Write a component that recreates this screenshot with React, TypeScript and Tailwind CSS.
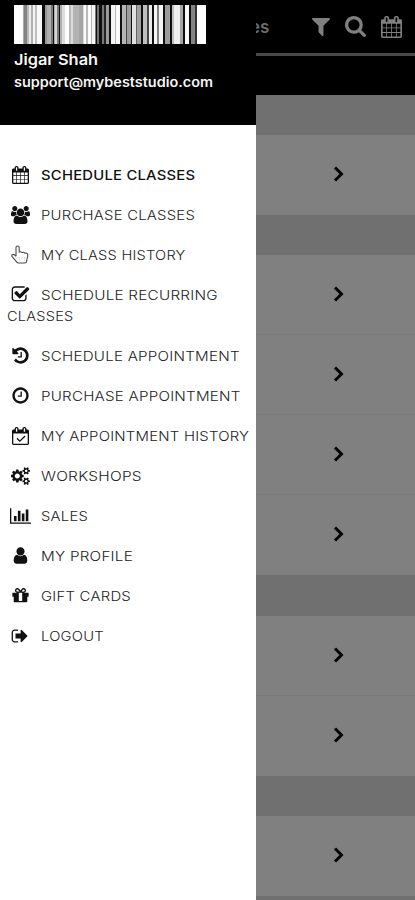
interface IconShape {
  box: string;
  d: string;
}

const calendar: IconShape = {
  box: '64 0 1664 1792',
  d: 'M192 1664h288v-288h-288v288zm352 0h320v-288h-320v288zm-352-352h288v-320h-288v320zm352 0h320v-320h-320v320zm-352-384h288v-288h-288v288zm736 736h320v-288h-320v288zm-384-736h320v-288h-320v288zm768 736h288v-288h-288v288zm-384-352h320v-320h-320v320zm-352-864v-288q0-13-9.5-22.5t-22.5-9.5h-64q-13 0-22.5 9.5t-9.5 22.5v288q0 13 9.5 22.5t22.5 9.5h64q13 0 22.5-9.5t9.5-22.5zm736 864h288v-320h-288v320zm-384-384h320v-288h-320v288zm384 0h288v-288h-288v288zm32-480v-288q0-13-9.5-22.5t-22.5-9.5h-64q-13 0-22.5 9.5t-9.5 22.5v288q0 13 9.5 22.5t22.5 9.5h64q13 0 22.5-9.5t9.5-22.5zm384-64v1280q0 52-38 90t-90 38h-1408q-52 0-90-38t-38-90v-1280q0-52 38-90t90-38h128v-96q0-66 47-113t113-47h64q66 0 113 47t47 113v96h384v-96q0-66 47-113t113-47h64q66 0 113 47t47 113v96h128q52 0 90 38t38 90z',
};
const users: IconShape = {
  box: '0 0 1920 1792',
  d: 'M593 896q-162 5-265 128h-134q-82 0-138-40.5t-56-118.5q0-353 124-353 6 0 43.5 21t97.5 42.5 119 21.5q67 0 133-23-5 37-5 66 0 139 81 256zm1071 637q0 120-73 189.5t-194 69.5h-874q-121 0-194-69.5t-73-189.5q0-53 3.5-103.5t14-109 26.5-108.5 43-97.5 62-81 85.5-53.5 111.5-20q10 0 43 21.5t73 48 107 48 135 21.5 135-21.5 107-48 73-48 43-21.5q61 0 111.5 20t85.5 53.5 62 81 43 97.5 26.5 108.5 14 109 3.5 103.5zm-1024-1277q0 106-75 181t-181 75-181-75-75-181 75-181 181-75 181 75 75 181zm704 384q0 159-112.5 271.5t-271.5 112.5-271.5-112.5-112.5-271.5 112.5-271.5 271.5-112.5 271.5 112.5 112.5 271.5zm576 225q0 78-56 118.5t-138 40.5h-134q-103-123-265-128 81-117 81-256 0-29-5-66 66 23 133 23 59 0 119-21.5t97.5-42.5 43.5-21q124 0 124 353zm-128-609q0 106-75 181t-181 75-181-75-75-181 75-181 181-75 181 75 75 181z',
};
const checkSquare: IconShape = {
  box: '0 0 1792 1792',
  d: 'M1472 930v318q0 119-84.5 203.5t-203.5 84.5h-832q-119 0-203.5-84.5t-84.5-203.5v-832q0-119 84.5-203.5t203.5-84.5h832q63 0 117 25 15 7 18 23 3 17-9 29l-49 49q-10 10-23 10-3 0-9-2-23-6-45-6h-832q-66 0-113 47t-47 113v832q0 66 47 113t113 47h832q66 0 113-47t47-113v-254q0-13 9-22l64-64q10-10 23-10 6 0 12 3 20 8 20 29zm231-489l-814 814q-24 24-57 24t-57-24l-430-430q-24-24-24-57t24-57l110-110q24-24 57-24t57 24l263 263 647-647q24-24 57-24t57 24l110 110q24 24 24 57t-24 57z',
};
const history: IconShape = {
  box: '0 0 1792 1792',
  d: 'M1664 896q0 156-61 298t-164 245-245 164-298 61q-172 0-327-72.5t-264-204.5q-7-10-6.5-22.5t8.5-20.5l137-138q10-9 25-9 16 2 23 12 73 95 179 147t225 52q104 0 198.5-40.5t163.5-109.5 109.5-163.5 40.5-198.5-40.5-198.5-109.5-163.5-163.5-109.5-198.5-40.5q-98 0-188 35.5t-160 101.5l137 138q31 30 14 69-17 40-59 40h-448q-26 0-45-19t-19-45v-448q0-42 40-59 39-17 69 14l130 129q107-101 244.5-156.5t284.5-55.5q156 0 298 61t245 164 164 245 61 298zm-640-288v448q0 14-9 23t-23 9h-320q-14 0-23-9t-9-23v-64q0-14 9-23t23-9h224v-352q0-14 9-23t23-9h64q14 0 23 9t9 23z',
};
const clock: IconShape = {
  box: '0 0 1792 1792',
  d: 'M1024 544v448q0 14-9 23t-23 9h-320q-14 0-23-9t-9-23v-64q0-14 9-23t23-9h224v-352q0-14 9-23t23-9h64q14 0 23 9t9 23zm416 352q0-148-73-273t-198-198-273-73-273 73-198 198-73 273 73 273 198 198 273 73 273-73 198-198 73-273zm224 0q0 209-103 385.5t-279.5 279.5-385.5 103-385.5-103-279.5-279.5-103-385.5 103-385.5 279.5-279.5 385.5-103 385.5 103 279.5 279.5 103 385.5z',
};
const calendarCheck: IconShape = {
  box: '0 0 1664 1792',
  d: 'M1303 964l-512 512q-10 9-23 9t-23-9l-288-288q-9-10-9-23t9-22l46-46q9-9 22-9t23 9l220 220 444-444q10-9 23-9t22 9l46 46q9 9 9 22t-9 23zm-1175 700h1408v-1024h-1408v1024zm384-1216v-288q0-14-9-23t-23-9h-64q-14 0-23 9t-9 23v288q0 14 9 23t23 9h64q14 0 23-9t9-23zm768 0v-288q0-14-9-23t-23-9h-64q-14 0-23 9t-9 23v288q0 14 9 23t23 9h64q14 0 23-9t9-23zm384-64v1280q0 52-38 90t-90 38h-1408q-52 0-90-38t-38-90v-1280q0-52 38-90t90-38h128v-96q0-66 47-113t113-47h64q66 0 113 47t47 113v96h384v-96q0-66 47-113t113-47h64q66 0 113 47t47 113v96h128q52 0 90 38t38 90z',
};
const cogs: IconShape = {
  box: '0 0 1920 1792',
  d: 'M896 896q0-106-75-181t-181-75-181 75-75 181 75 181 181 75 181-75 75-181zm768 512q0-52-38-90t-90-38-90 38-38 90q0 53 37.5 90.5t90.5 37.5 90.5-37.5 37.5-90.5zm0-1024q0-52-38-90t-90-38-90 38-38 90q0 53 37.5 90.5t90.5 37.5 90.5-37.5 37.5-90.5zm-384 421v185q0 10-7 19.5t-16 10.5l-155 24q-11 35-32 76 34 48 90 115 7 11 7 20 0 12-7 19-23 30-82.5 89.5t-78.5 59.5q-11 0-21-7l-115-90q-37 19-77 31-11 108-23 155-7 24-30 24h-186q-11 0-20-7.5t-10-17.5l-23-153q-34-10-75-31l-118 89q-7 7-20 7-11 0-21-8-144-133-144-160 0-9 7-19 10-14 41-53t47-61q-23-44-35-82l-152-24q-10-1-17-9.5t-7-19.5v-185q0-10 7-19.5t16-10.5l155-24q11-35 32-76-34-48-90-115-7-11-7-20 0-12 7-20 22-30 82-89t79-59q11 0 21 7l115 90q34-18 77-32 11-108 23-154 7-24 30-24h186q11 0 20 7.5t10 17.5l23 153q34 10 75 31l118-89q8-7 20-7 11 0 21 8 144 133 144 160 0 8-7 19-12 16-42 54t-45 60q23 48 34 82l152 23q10 2 17 10.5t7 19.5zm640 533v140q0 16-149 31-12 27-30 52 51 113 51 138 0 4-4 7-122 71-124 71-8 0-46-47t-52-68q-20 2-30 2t-30-2q-14 21-52 68t-46 47q-2 0-124-71-4-3-4-7 0-25 51-138-18-25-30-52-149-15-149-31v-140q0-16 149-31 13-29 30-52-51-113-51-138 0-4 4-7 4-2 35-20t59-34 30-16q8 0 46 46.5t52 67.5q20-2 30-2t30 2q51-71 92-112l6-2q4 0 124 70 4 3 4 7 0 25-51 138 17 23 30 52 149 15 149 31zm0-1024v140q0 16-149 31-12 27-30 52 51 113 51 138 0 4-4 7-122 71-124 71-8 0-46-47t-52-68q-20 2-30 2t-30-2q-14 21-52 68t-46 47q-2 0-124-71-4-3-4-7 0-25 51-138-18-25-30-52-149-15-149-31v-140q0-16 149-31 13-29 30-52-51-113-51-138 0-4 4-7 4-2 35-20t59-34 30-16q8 0 46 46.5t52 67.5q20-2 30-2t30 2q51-71 92-112l6-2q4 0 124 70 4 3 4 7 0 25-51 138 17 23 30 52 149 15 149 31z',
};
const barChart: IconShape = {
  box: '0 0 2048 1792',
  d: 'M640 896v512h-256v-512h256zm384-512v1024h-256v-1024h256zm1024 1152v128h-2048v-1536h128v1408h1920zm-640-896v768h-256v-768h256zm384-384v1152h-256v-1152h256z',
};
const user: IconShape = {
  box: '0 0 1792 1792',
  d: 'M1536 1399q0 109-62.5 187t-150.5 78h-854q-88 0-150.5-78t-62.5-187q0-85 8.5-160.5t31.5-152 58.5-131 94-89 134.5-34.5q131 128 313 128t313-128q76 0 134.5 34.5t94 89 58.5 131 31.5 152 8.5 160.5zm-256-887q0 159-112.5 271.5t-271.5 112.5-271.5-112.5-112.5-271.5 112.5-271.5 271.5-112.5 271.5 112.5 112.5 271.5z',
};
const gift: IconShape = {
  box: '0 0 1792 1792',
  d: 'M1056 1356v-716h-320v716q0 25 18 38.5t46 13.5h192q28 0 46-13.5t18-38.5zm-456-844h195l-126-161q-26-31-69-31-40 0-68 28t-28 68 28 68 68 28zm688-96q0-40-28-68t-68-28q-43 0-69 31l-125 161h194q40 0 68-28t28-68zm376 256v320q0 14-9 23t-23 9h-96v416q0 40-28 68t-68 28h-1088q-40 0-68-28t-28-68v-416h-96q-14 0-23-9t-9-23v-320q0-14 9-23t23-9h440q-93 0-158.5-65.5t-65.5-158.5 65.5-158.5 158.5-65.5q107 0 168 77l128 165 128-165q61-77 168-77 93 0 158.5 65.5t65.5 158.5-65.5 158.5-158.5 65.5h440q14 0 23 9t9 23z',
};
const signOut: IconShape = {
  box: '0 0 1792 1792',
  d: 'M704 1440q0 4 1 20t.5 26.5-3 23.5-10 19.5-20.5 6.5h-320q-119 0-203.5-84.5t-84.5-203.5v-704q0-119 84.5-203.5t203.5-84.5h320q13 0 22.5 9.5t9.5 22.5q0 4 1 20t.5 26.5-3 23.5-10 19.5-20.5 6.5h-320q-66 0-113 47t-47 113v704q0 66 47 113t113 47h312l11.5 1 11.5 3 8 5.5 7 9 2 13.5zm928-544q0 26-19 45l-544 544q-19 19-45 19t-45-19-19-45v-288h-448q-26 0-45-19t-19-45v-384q0-26 19-45t45-19h448v-288q0-26 19-45t45-19 45 19l544 544q19 19 19 45z',
};
const filter: IconShape = {
  box: '192 256 1408 1408',
  d: 'M1595 295q17 41-14 70l-493 493v742q0 42-39 59-13 5-25 5-27 0-45-19l-256-256q-19-19-19-45v-486l-493-493q-31-29-14-70 17-39 59-39h1280q42 0 59 39z',
};
const search: IconShape = {
  box: '64 128 1664 1664',
  d: 'M1216 832q0-185-131.5-316.5t-316.5-131.5-316.5 131.5-131.5 316.5 131.5 316.5 316.5 131.5 316.5-131.5 131.5-316.5zm512 832q0 52-38 90t-90 38q-54 0-90-38l-343-342q-179 124-399 124-143 0-273.5-55.5t-225-150-150-225-55.5-273.5 55.5-273.5 150-225 225-150 273.5-55.5 273.5 55.5 225 150 150 225 55.5 273.5q0 220-124 399l343 343q37 37 37 90z',
};

function Icon({ shape, className }: { shape: IconShape; className: string }) {
  return (
    <svg viewBox={shape.box} preserveAspectRatio="none" fill="currentColor" className={className} aria-hidden="true">
      <path d={shape.d} />
    </svg>
  );
}

function HandPointer() {
  return (
    <svg viewBox="0 0 18 19" className="h-[19px] w-[18px]" fill="none" stroke="#4a4a4a" strokeWidth="1.1" strokeLinejoin="round" aria-hidden="true">
      <path d="M5 11V2.6a1.6 1.6 0 0 1 3.2 0V7.2c.9-.8 2.4-.6 2.9.4.9-.7 2.3-.4 2.7.6 1.5-.6 3 .3 3 1.9 0 2.6-1.2 3.8-1.2 6.1 0 1.2-.8 1.8-1.8 1.8H7.4c-.7 0-1.2-.3-1.6-.9L1.1 11.7c-1-1.5.8-3 2.2-2L5 11.3" />
      <path d="M8.4 12v2.6M11 12v2.6M13.5 12v2.6" stroke="#ccc" strokeWidth="0.7" />
    </svg>
  );
}

// Widths (px) and grey levels of the member barcode, left to right.
const bars: [number, number][] = [
  [9, 255], [1, 170], [3, 130], [1.5, 185], [2.5, 235], [1.5, 175], [2.5, 245], [1.5, 190], [4.5, 248],
  [3, 12], [2, 150], [4, 175], [2, 120], [1.5, 12], [1, 170], [2, 215], [1.5, 120], [1.5, 15],
  [2, 175], [2, 220], [4, 252], [2.5, 185], [1.5, 220], [6, 178], [4, 165], [1.5, 215], [2, 250], [1.5, 185],
  [2.5, 252], [1.5, 180], [2.5, 245], [1, 120], [1.5, 15], [1.5, 115], [3, 15], [2.5, 120], [2, 35], [3, 155],
  [1.5, 15], [3.5, 245], [1.5, 185], [3.5, 250], [2, 15], [4, 180], [1, 70], [4, 155], [1.5, 15],
  [4, 225], [1, 100], [3.5, 160], [2, 15], [4, 190], [1.5, 70], [3.5, 235], [1.5, 15],
  [3.5, 245], [1.5, 130], [4, 245], [2, 15], [4.5, 155], [2, 15], [2.5, 190], [5.5, 238], [3.5, 165],
  [1.5, 15], [3.5, 250], [2, 15], [4.5, 130], [1.5, 50], [9, 255],
];

interface MenuItem {
  label: string;
  icon: React.ReactNode;
  stretch: string;
  rest?: string;
  active?: boolean;
}

const menu: MenuItem[] = [
  { label: 'SCHEDULE CLASSES', icon: <Icon shape={calendar} className="h-[18px] w-[17px]" />, stretch: 'scale-x-[1.14]', active: true },
  { label: 'PURCHASE CLASSES', icon: <Icon shape={users} className="h-[18px] w-[19px]" />, stretch: 'scale-x-[1.145]' },
  { label: 'MY CLASS HISTORY', icon: <HandPointer />, stretch: 'scale-x-[1.125]' },
  { label: 'SCHEDULE RECURRING', rest: 'CLASSES', icon: <Icon shape={checkSquare} className="h-[19px] w-[19px]" />, stretch: 'scale-x-[1.173]' },
  { label: 'SCHEDULE APPOINTMENT', icon: <Icon shape={history} className="h-[19px] w-[19px]" />, stretch: 'scale-x-[1.164]' },
  { label: 'PURCHASE APPOINTMENT', icon: <Icon shape={clock} className="h-[19px] w-[19px]" />, stretch: 'scale-x-[1.164]' },
  { label: 'MY APPOINTMENT HISTORY', icon: <Icon shape={calendarCheck} className="h-[18px] w-[17px]" />, stretch: 'scale-x-[1.146]' },
  { label: 'WORKSHOPS', icon: <Icon shape={cogs} className="h-[18px] w-[19px]" />, stretch: 'scale-x-[1.188]' },
  { label: 'SALES', icon: <Icon shape={barChart} className="h-[18px] w-[21px]" />, stretch: 'scale-x-[1.14]' },
  { label: 'MY PROFILE', icon: <Icon shape={user} className="h-[19px] w-[19px]" />, stretch: 'scale-x-[1.173]' },
  { label: 'GIFT CARDS', icon: <Icon shape={gift} className="h-[19px] w-[19px]" />, stretch: 'scale-x-[1.147]' },
  { label: 'LOGOUT', icon: <Icon shape={signOut} className="h-[18px] w-[18px]" />, stretch: 'scale-x-[1.135]' },
];

// Height of each day heading and the number of class rows under it.
const days = [
  { heading: 'h-10', rows: 1 },
  { heading: 'h-10', rows: 4 },
  { heading: 'h-[41px]', rows: 2 },
  { heading: 'h-10', rows: 1 },
];

function Drawer() {
  return (
    <aside className="flex w-64 shrink-0 flex-col bg-white">
      <header className="h-[125px] bg-black pt-[5px] pl-3.5 text-[#f5f5f5]">
        <div className="flex h-[39px] w-48 overflow-hidden bg-white">
          {bars.map(([width, level], i) => (
            <span key={i} style={{ flex: `${width} 1 0`, backgroundColor: `rgb(${level},${level},${level})` }} />
          ))}
        </div>
        <p className="mt-[5px] origin-left scale-x-[1.09] text-[15px] leading-[22px] font-semibold whitespace-nowrap">Jigar Shah</p>
        <p className="origin-left scale-x-[1.11] text-[13px] leading-[22px] font-semibold whitespace-nowrap">support@mybeststudio.com</p>
      </header>
      <nav className="pt-[30px]">
        {menu.map((item) => (
          <a key={item.label} className="block py-[9.5px] pl-[7px] text-[13px] leading-[21px] tracking-[0.2px]">
            <span className="flex items-center">
              <span className="mr-2 flex w-[26px] shrink-0 justify-center pb-px text-[#111]">{item.icon}</span>
              <span className={`origin-left whitespace-nowrap ${item.stretch} ${item.active ? 'font-medium text-[#111]' : 'font-light text-[#222]'}`}>
                {item.label}
              </span>
            </span>
            {item.rest && <span className="block origin-left scale-x-[1.12] font-light text-[#222]">{item.rest}</span>}
          </a>
        ))}
      </nav>
    </aside>
  );
}

function ClassRow({ last }: { last: boolean }) {
  return (
    <div className={`flex h-20 items-center border-b bg-[#808080] pb-px pl-[77px] ${last ? 'border-[#808080]' : 'border-[#7a7a7a]'}`}>
      <svg viewBox="0 0 12 16" className="h-4 w-3" fill="none" stroke="#050505" strokeWidth="3">
        <path d="M2 1.5 8.5 8 2 14.5" />
      </svg>
    </div>
  );
}

export default function App() {
  return (
    <div className="flex h-[900px] w-[415px] overflow-hidden bg-black font-['Inter',sans-serif]">
      <Drawer />
      <main className="flex min-w-0 flex-1 flex-col overflow-hidden">
        <div className="flex h-[56px] shrink-0 items-center border-b-[3px] border-[#484848] text-[#808080]">
          <span className="-ml-1.5 w-[62px] pt-0.5 text-[17px] font-semibold text-[#6c6c6c]">es</span>
          <Icon shape={filter} className="h-[18px] w-[18px]" />
          <Icon shape={search} className="ml-[15px] h-[21px] w-[21px]" />
          <Icon shape={calendar} className="ml-[15px] h-[22px] w-[21px]" />
        </div>
        <div className="h-[39px] shrink-0 bg-black" />
        {days.map((day, index) => (
          <section key={index} className="shrink-0">
            <div className={`bg-[#707070] ${day.heading}`} />
            {Array.from({ length: day.rows }, (_, i) => (
              <ClassRow key={i} last={i === day.rows - 1} />
            ))}
          </section>
        ))}
        <div className="flex-1 bg-[#707070]" />
      </main>
    </div>
  );
}
